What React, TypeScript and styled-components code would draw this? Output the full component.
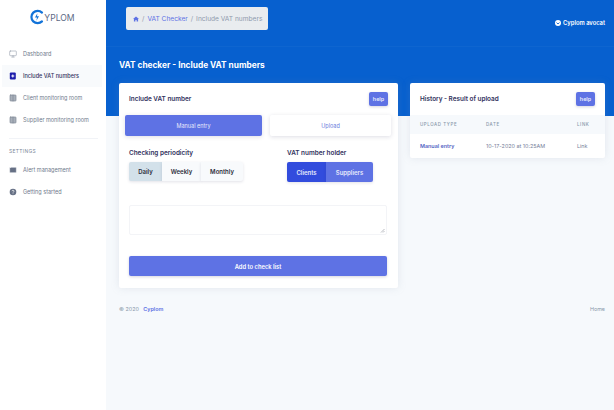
import { createGlobalStyle, styled } from "styled-components";
import { Monitor, Columns2, Mail } from "lucide-react";

const GlobalStyle = createGlobalStyle`
  html, body {
    margin: 0;
    height: 100%;
    background: #f6f9fc;
    font-family: Inter, "Liberation Sans", sans-serif;
  }
  * { box-sizing: border-box; }
`;

const Page = styled.div`
  display: flex;
  width: 614px;
  height: 410px;
  overflow: hidden;
`;

const Sidebar = styled.aside`
  width: 106px;
  flex: none;
  background: #fff;
  padding: 7px 0 0 2px;
`;

const Logo = styled.div`
  display: flex;
  align-items: center;
  justify-content: center;
  height: 22px;
  margin: 0 0 14px 0;
  padding-right: 4px;
  font-size: 8.6px;
  color: #5d6a85;
  svg { margin-right: -1px; margin-top: -3px; }
`;

const NavItem = styled.div<{ $active?: boolean }>`
  display: flex;
  align-items: center;
  height: 22px;
  width: 100px;
  padding-left: 7px;
  gap: 6px;
  font-size: 5.5px;
  white-space: nowrap;
  color: ${(p) => (p.$active ? "#32325d" : "#6f7a8c")};
  font-weight: ${(p) => (p.$active ? 500 : 400)};
  background: ${(p) => (p.$active ? "#f8fafc" : "transparent")};
  svg { width: 8px; height: 8px; flex: none; }
`;

const Divider = styled.hr`
  border: 0;
  border-top: 1px solid #f1f3f7;
  margin: 7px 8px 8px 7px;
`;

const SectionLabel = styled.div`
  font-size: 4.9px;
  letter-spacing: 0.35px;
  color: #7b8798;
  padding-left: 7px;
  height: 8px;
  line-height: 8px;
  margin-bottom: 4px;
`;

const Main = styled.main`
  flex: 1;
  min-width: 0;
  display: flex;
  flex-direction: column;
`;

const Hero = styled.div`
  background: #0760cf;
  height: 116px;
  flex: none;
`;

const Topbar = styled.div`
  height: 47px;
  padding: 7px 9px 0 20px;
  display: flex;
  justify-content: space-between;
  align-items: flex-start;
  border-bottom: 1px solid rgba(255, 255, 255, 0.03);
`;

const Breadcrumb = styled.nav`
  display: flex;
  align-items: center;
  gap: 3px;
  width: 142px;
  height: 23px;
  padding-left: 7px;
  background: #e9ecef;
  border-radius: 2px;
  font-size: 6.6px;
  white-space: nowrap;
  color: #8f9aad;
  svg { flex: none; }
`;

const Crumb = styled.span`
  color: #5e72e4;
`;

const UserName = styled.div`
  display: flex;
  align-items: center;
  gap: 2px;
  margin-top: 12px;
  font-size: 5.8px;
  font-weight: 600;
  color: #fff;
`;

const PageTitle = styled.h1`
  margin: 0;
  padding: 11px 0 0 13px;
  font-size: 8.3px;
  line-height: 14px;
  font-weight: 700;
  color: #fff;
`;

const Content = styled.div`
  margin-top: -33px;
  padding: 0 9px 0 13px;
  display: flex;
  gap: 12px;
  align-items: flex-start;
`;

const Card = styled.section<{ $width: number }>`
  width: ${(p) => p.$width}px;
  flex: none;
  background: #fff;
  border-radius: 2px;
  box-shadow: 0 0 8px rgba(136, 152, 170, 0.18);
`;

const CardHeader = styled.div`
  display: flex;
  align-items: center;
  justify-content: space-between;
  height: 32px;
  padding: 0 10px;
`;

const CardTitle = styled.h3`
  margin: 0;
  font-size: 6.4px;
  font-weight: 600;
  color: #32325d;
`;

const HelpButton = styled.button`
  width: 19px;
  height: 14px;
  padding: 0;
  border: 0;
  border-radius: 2px;
  background: #5e72e4;
  color: #e6e9fb;
  font: 600 5.4px Inter, sans-serif;
  box-shadow: 0 1px 3px rgba(50, 50, 93, 0.2);
`;

const FormBody = styled.div`
  padding: 0 6px 12px;
`;

const Tabs = styled.div`
  display: flex;
  gap: 8px;
`;

const Tab = styled.div<{ $active?: boolean; $width: number }>`
  width: ${(p) => p.$width}px;
  height: 21px;
  border-radius: 2px;
  display: flex;
  align-items: center;
  justify-content: center;
  font-size: 5.5px;
  color: ${(p) => (p.$active ? "#e6e9fb" : "#6a7bdc")};
  background: ${(p) => (p.$active ? "#5e72e4" : "#fff")};
  box-shadow: 0 1px 4px rgba(50, 50, 93, 0.16);
`;

const OptionRow = styled.div`
  display: flex;
  padding: 13px 4px 0;
`;

const OptionGroup = styled.div<{ $width: number }>`
  width: ${(p) => p.$width}px;
`;

const OptionLabel = styled.div`
  font-size: 6.4px;
  line-height: 8px;
  font-weight: 600;
  color: #32325d;
  margin-bottom: 5px;
`;

const ButtonGroup = styled.div`
  display: flex;
  width: fit-content;
`;

const Segment = styled.div<{ $width: number; $tone: "selected" | "plain" | "strong" | "primary" }>`
  width: ${(p) => p.$width}px;
  height: ${(p) => (p.$tone === "strong" || p.$tone === "primary" ? 20 : 19)}px;
  display: flex;
  align-items: center;
  justify-content: center;
  font-size: 6px;
  font-weight: 600;
  color: ${(p) =>
    p.$tone === "strong" || p.$tone === "primary" ? "#e6e9fb" : "#2b2d3a"};
  background: ${(p) =>
    ({ selected: "#d3e1ea", plain: "#f8fafc", strong: "#324cdd", primary: "#5e72e4" })[p.$tone]};
  box-shadow: 0 1px 3px rgba(50, 50, 93, 0.14);
  &:first-child { border-radius: 2px 0 0 2px; }
  &:last-child { border-radius: 0 2px 2px 0; }
`;

const Note = styled.div`
  position: relative;
  width: 258px;
  height: 30px;
  margin: 23px 0 0 4px;
  border: 1px solid #f3f4f7;
  border-radius: 2px;
  background: #fff;
`;

const ResizeGrip = styled.svg`
  position: absolute;
  right: 1px;
  bottom: 1px;
`;

const SubmitButton = styled.button`
  display: block;
  width: 258px;
  height: 20px;
  margin: 21px 0 0 4px;
  padding: 0;
  border: 0;
  border-radius: 2px;
  background: #5e72e4;
  color: #fff;
  font: 600 5.8px Inter, sans-serif;
  box-shadow: 0 1px 3px rgba(50, 50, 93, 0.2);
`;

const Table = styled.table`
  width: 100%;
  border-collapse: collapse;
`;

const HeadCell = styled.th<{ $width: number }>`
  width: ${(p) => p.$width}px;
  height: 19px;
  padding: 0 0 0 10px;
  text-align: left;
  background: #f6f9fc;
  font-size: 4.4px;
  font-weight: 500;
  letter-spacing: 0.6px;
  color: #8898aa;
`;

const BodyCell = styled.td<{ $strong?: boolean }>`
  height: 24px;
  padding: 0 0 0 10px;
  font-size: 5.4px;
  white-space: nowrap;
  font-weight: ${(p) => (p.$strong ? 600 : 400)};
  color: ${(p) => (p.$strong ? "#5566c4" : "#76809a")};
`;

const Footer = styled.footer`
  display: flex;
  justify-content: space-between;
  padding: 16px 9px 0 13px;
  font-size: 5.4px;
  line-height: 10px;
  color: #8898aa;
`;

const FooterBrand = styled.span`
  color: #5e72e4;
  font-weight: 600;
  margin-left: 3px;
`;

function LogoMark() {
  return (
    <svg width="16" height="16" viewBox="0 0 16 16" fill="none">
      <path d="M13 3.6A6.2 6.2 0 1 0 13 12.4" stroke="#1273d8" strokeWidth="2.2" strokeLinecap="round" />
      <path d="M8.4 4.2 6 8.4h2l-.6 3.4 2.6-4.6H8z" fill="#1273d8" />
    </svg>
  );
}

function PlusSquare() {
  return (
    <svg viewBox="0 0 8 8">
      <rect x="0.8" y="0.5" width="6" height="7" rx="1" fill="#1d1dab" />
      <path d="M3.8 2.5v3M2.3 4h3" stroke="#fff" strokeWidth="1" />
    </svg>
  );
}

function HelpCircle() {
  return (
    <svg viewBox="0 0 8 8">
      <circle cx="4" cy="4" r="3.3" fill="#667085" />
      <path d="M3 3.2c0-1.3 2-1.3 2 0 0 .8-1 .8-1 1.5" stroke="#fff" strokeWidth=".7" fill="none" />
      <circle cx="4" cy="5.8" r=".45" fill="#fff" />
    </svg>
  );
}

function CheckBadge() {
  return (
    <svg width="6" height="6" viewBox="0 0 6 6">
      <circle cx="3" cy="3" r="3" fill="#fff" />
      <path d="M1.5 2.6 3 4l1.5-1.4" stroke="#0760cf" strokeWidth=".9" fill="none" />
    </svg>
  );
}

function HomeGlyph() {
  return (
    <svg width="6" height="6" viewBox="0 0 6 6">
      <path d="M3 .4 0 3.1h.9V5.6h1.5V3.9h1.2v1.7h1.5V3.1H6z" fill="#5e72e4" />
    </svg>
  );
}

export default function App() {
  return (
    <Page>
      <GlobalStyle />
      <Sidebar>
        <Logo>
          <LogoMark />
          YPLOM
        </Logo>
        <NavItem>
          <Monitor color="#8a94a3" strokeWidth={1.6} />
          Dashboard
        </NavItem>
        <NavItem $active>
          <PlusSquare />
          Include VAT numbers
        </NavItem>
        <NavItem>
          <Columns2 color="#7d8794" fill="#a9b0ba" strokeWidth={2} />
          Client monitoring room
        </NavItem>
        <NavItem>
          <Columns2 color="#7d8794" fill="#a9b0ba" strokeWidth={2} />
          Supplier monitoring room
        </NavItem>
        <Divider />
        <SectionLabel>SETTINGS</SectionLabel>
        <NavItem>
          <Mail color="#fff" fill="#667085" strokeWidth={1.5} />
          Alert management
        </NavItem>
        <NavItem>
          <HelpCircle />
          Getting started
        </NavItem>
      </Sidebar>
      <Main>
        <Hero>
          <Topbar>
            <Breadcrumb>
              <HomeGlyph />
              <span>/</span>
              <Crumb>VAT Checker</Crumb>
              <span>/</span>
              <span>Include VAT numbers</span>
            </Breadcrumb>
            <UserName>
              <CheckBadge />
              Cyplom avocat
            </UserName>
          </Topbar>
          <PageTitle>VAT checker - Include VAT numbers</PageTitle>
        </Hero>
        <Content>
          <Card $width={279}>
            <CardHeader>
              <CardTitle>Include VAT number</CardTitle>
              <HelpButton>help</HelpButton>
            </CardHeader>
            <FormBody>
              <Tabs>
                <Tab $active $width={137}>Manual entry</Tab>
                <Tab $width={121}>Upload</Tab>
              </Tabs>
              <OptionRow>
                <OptionGroup $width={158}>
                  <OptionLabel>Checking periodicity</OptionLabel>
                  <ButtonGroup>
                    <Segment $tone="selected" $width={33}>Daily</Segment>
                    <Segment $tone="plain" $width={39}>Weekly</Segment>
                    <Segment $tone="plain" $width={42}>Monthly</Segment>
                  </ButtonGroup>
                </OptionGroup>
                <OptionGroup $width={100}>
                  <OptionLabel>VAT number holder</OptionLabel>
                  <ButtonGroup>
                    <Segment $tone="strong" $width={39}>Clients</Segment>
                    <Segment $tone="primary" $width={47}>Suppliers</Segment>
                  </ButtonGroup>
                </OptionGroup>
              </OptionRow>
              <Note>
                <ResizeGrip width="5" height="5" viewBox="0 0 5 5">
                  <path d="M4.5 1 1 4.5M4.5 3 3 4.5" stroke="#8a8f98" strokeWidth=".6" />
                </ResizeGrip>
              </Note>
              <SubmitButton>Add to check list</SubmitButton>
            </FormBody>
          </Card>
          <Card $width={195}>
            <CardHeader>
              <CardTitle>History - Result of upload</CardTitle>
              <HelpButton>help</HelpButton>
            </CardHeader>
            <Table>
              <thead>
                <tr>
                  <HeadCell $width={66}>UPLOAD TYPE</HeadCell>
                  <HeadCell $width={91}>DATE</HeadCell>
                  <HeadCell $width={38}>LINK</HeadCell>
                </tr>
              </thead>
              <tbody>
                <tr>
                  <BodyCell $strong>Manual entry</BodyCell>
                  <BodyCell>10-17-2020 at 10:25AM</BodyCell>
                  <BodyCell>Link</BodyCell>
                </tr>
              </tbody>
            </Table>
          </Card>
        </Content>
        <Footer>
          <div>
            © 2020 <FooterBrand>Cyplom</FooterBrand>
          </div>
          <div>Home</div>
        </Footer>
      </Main>
    </Page>
  );
}
